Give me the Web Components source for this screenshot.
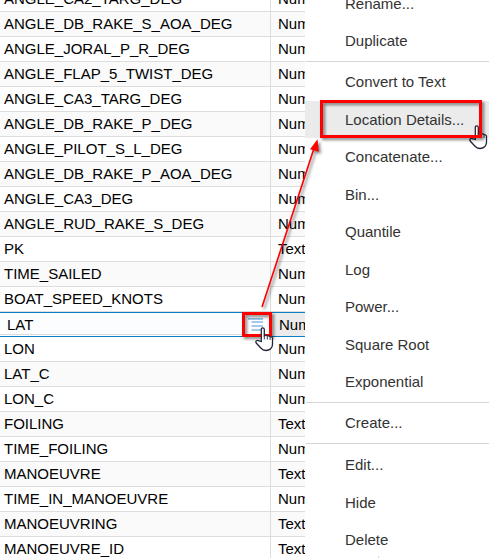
<!DOCTYPE html>
<html lang="en"><head><meta charset="utf-8"><title>Data columns</title>
<style>
html,body{margin:0;height:558px;overflow:hidden;background:#fff}
body{font:15px "Liberation Sans",Arial,sans-serif}
</style></head><body><data-app></data-app>
<script>
const el=(name,html,init)=>customElements.define(name,class extends HTMLElement{
  constructor(){super();this.attachShadow({mode:'open'}).innerHTML=html;}
  connectedCallback(){if(init)init.call(this,this.shadowRoot);}
});
el('data-row',`<style>
:host{display:flex;height:25px;box-sizing:border-box;border-bottom:1px solid #ddd;line-height:24px;color:#000;background:#fff}
:host([alt]){background:#fafafa}
div{white-space:nowrap;overflow:hidden;box-sizing:border-box}
.n{width:271px;padding-left:4px;border-right:1px solid #ddd}
.t{flex:1;padding-left:7px}
:host([active]){border-top:1px solid #0a7fc4;border-bottom-color:#0a7fc4;background:#fcfdff;line-height:24px}
:host([active]) .n{padding-left:7px;border-bottom:1px solid #ddd;height:22px;margin-bottom:1px}
:host([active]) .t{padding-left:8px;background:#ebebeb}
</style><div class="n"><slot></slot></div><div class="t"><slot name="type"></slot></div>`);
el('menu-item',`<style>
:host{display:block;height:37.5px;line-height:37.5px;padding-left:40px;color:#333;white-space:nowrap;box-sizing:border-box}
:host([hover]){background:#ebebeb}
</style><slot></slot>`);
el('menu-separator',`<style>:host{display:block;height:1px;margin:1.3px 0 1.3px 1px;background:#d6d6d6}:host([wide]){margin-bottom:2.1px}</style>`);
el('highlight-box',`<style>:host{display:block;box-sizing:border-box;border:3px solid #f00;filter:drop-shadow(2px 2px 1.5px rgba(0,0,0,.5))}</style>`);
el('hand-cursor',`<style>:host{display:block}svg{display:block}</style>
<svg width="20" height="25" viewBox="0 0 20 25"><path d="M6.3 14.5V2.4Q6.3 .8 7.8 .8T9.3 2.4V9.4Q9.3 8.2 10.8 8.2T12.3 9.6Q12.3 8.9 13.7 8.9T15 10.4Q15.1 9.8 16.2 9.8T17.5 11.4V17.4Q17.5 19.6 15.6 21.8Q14 23.5 11 23.5Q7.7 23.5 6 21.2L1.2 16Q.3 14.6 1.5 13.8Q2.8 13 4.2 13.9Z" fill="#fff" stroke="#25253a" stroke-width="1.3"/><path d="M9.3 8.5V12.5M12.3 9.5V12.5M15.1 10.3V13" stroke="#25253a" stroke-width=".9"/></svg>`);
el('list-icon',`<style>:host{display:block}svg{display:block}</style>
<svg width="16" height="14" viewBox="0 0 16 14"><path d="M0 .8h15M3.5 4h11.5M3.5 8h11.5M3.5 12h11.5" stroke="#86b9e0" stroke-width="1.7"/></svg>`);
el('pointer-arrow',`<style>:host{display:block}svg{display:block;filter:drop-shadow(2px 2px 1.5px rgba(0,0,0,.5))}</style>
<svg width="80" height="180"><path d="M6 177L57.8 19" stroke="#f00" stroke-width="1.6"/><path d="M61.5 9.3L62.8 21.8L54 19.2Z" fill="#f00"/></svg>`);
el('data-app',`<style>
:host{display:grid;grid-template-columns:305px 184px;height:558px;overflow:hidden;position:relative}
.rows{margin-top:-13px;min-width:0}
.menu{margin-top:-15.3px;background:#fff}
.o{position:absolute}
</style><div class="rows"></div><div class="menu"></div>
<list-icon class="o" style="left:248px;top:318px"></list-icon>
<highlight-box class="o" style="left:242px;top:312px;width:30px;height:25px"></highlight-box>
<hand-cursor class="o" style="left:469px;top:125px"></hand-cursor>
<highlight-box class="o" style="left:320px;top:100px;width:162px;height:38px"></highlight-box>
<pointer-arrow class="o" style="left:256px;top:130px"></pointer-arrow>
<hand-cursor class="o" style="left:255px;top:327px"></hand-cursor>
<i class="o" style="left:378px;top:556px;width:1px;height:2px;background:#d6d6d6"></i>`,function(r){
const names='ANGLE_CA2_TARG_DEG ANGLE_DB_RAKE_S_AOA_DEG ANGLE_JORAL_P_R_DEG ANGLE_FLAP_5_TWIST_DEG ANGLE_CA3_TARG_DEG ANGLE_DB_RAKE_P_DEG ANGLE_PILOT_S_L_DEG ANGLE_DB_RAKE_P_AOA_DEG ANGLE_CA3_DEG ANGLE_RUD_RAKE_S_DEG PK TIME_SAILED BOAT_SPEED_KNOTS LAT LON LAT_C LON_C FOILING TIME_FOILING MANOEUVRE TIME_IN_MANOEUVRE MANOEUVRING MANOEUVRE_ID'.split(' ');
const text=new Set(['PK','FOILING','MANOEUVRE','MANOEUVRING','MANOEUVRE_ID']);
r.querySelector('.rows').innerHTML=names.map((n,i)=>`<data-row ${i%2?'alt':''} ${n==='LAT'?'active':''}>${n}<span slot="type">${text.has(n)?'Text':'Num'}</span></data-row>`).join('');
r.querySelector('.menu').innerHTML=['Rename...','Duplicate','-','Convert to Text','Location Details...','Concatenate...','Bin...','Quantile','Log','Power...','Square Root','Exponential','-','Create...','=','Edit...','Hide','Delete'].map(t=>t==='-'?'<menu-separator></menu-separator>':t==='='?'<menu-separator wide></menu-separator>':`<menu-item ${t.startsWith('Loc')?'hover':''}>${t}</menu-item>`).join('');
});
</script></body></html>
